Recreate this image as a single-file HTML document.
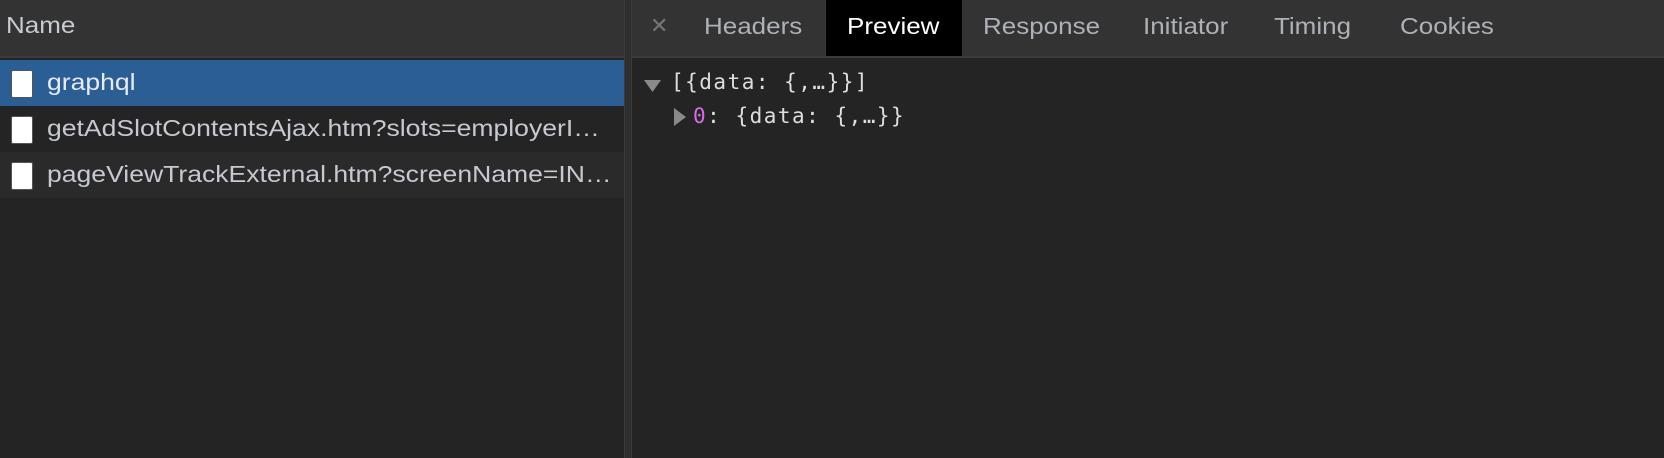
<!DOCTYPE html>
<html><head><style>
body{margin:0;width:1664px;height:458px;background:#242424;overflow:hidden;font-family:"Liberation Sans",sans-serif;position:relative}
.l{position:absolute;left:0;top:0;width:624px;height:458px;background:#242424}
.hd{position:absolute;left:0;top:0;width:624px;height:56px;background:#333;border-bottom:2px solid #3c3c3c}
.hd span{position:absolute;left:6px;top:12px;font-size:23px;color:#c8ccd2;transform:scaleX(1.13);transform-origin:left}
.row{position:absolute;left:0;width:624px;height:46px}
.row .ic{position:absolute;left:11px;top:10px;width:22px;height:28px;background:#fff;border:1px solid #555;box-sizing:border-box;border-radius:2px}
.row .t{position:absolute;left:47px;top:9px;font-size:23.5px;color:#c6cad0;white-space:nowrap;transform:scaleX(1.13);transform-origin:left}
.div{position:absolute;left:624px;top:0;width:8px;height:458px;background:#2e2e2e;border-left:1px solid #3a3a3a;border-right:1px solid #3a3a3a;box-sizing:border-box}
.rh{position:absolute;left:632px;top:0;width:1032px;height:56px;background:#333;border-bottom:2px solid #3c3c3c}
.tab{position:absolute;top:13px;font-size:23px;color:#aeb2b8;transform:scaleX(1.13);transform-origin:left}
.mono{position:absolute;font-family:"DejaVu Sans Mono","Liberation Mono",monospace;font-size:21px;color:#dedede;white-space:pre;letter-spacing:1.5px}
</style></head><body>
<div class="l"></div>
<div class="hd"><span>Name</span></div>
<div class="row" style="top:60px;background:#2c5e96"><div class="ic"></div><div class="t" style="color:#e6ecf4">graphql</div></div>
<div class="row" style="top:106px;background:#242424"><div class="ic"></div><div class="t">getAdSlotContentsAjax.htm?slots=employerI…</div></div>
<div class="row" style="top:152px;background:#2a2a2a"><div class="ic"></div><div class="t">pageViewTrackExternal.htm?screenName=IN…</div></div>
<div class="div"></div>
<div class="rh"></div>
<div class="tab" style="left:650px;top:13px;color:#777;transform:none;font-size:22px">✕</div>
<div class="tab" style="left:704px">Headers</div>
<div style="position:absolute;left:826px;top:0;width:136px;height:56px;background:#000"></div>
<div class="tab" style="left:847px;color:#fff">Preview</div>
<div class="tab" style="left:983px">Response</div>
<div class="tab" style="left:1143px">Initiator</div>
<div class="tab" style="left:1274px">Timing</div>
<div class="tab" style="left:1400px">Cookies</div>
<svg style="position:absolute;left:644px;top:80px" width="18" height="13"><path d="M0 0H17L8.5 12Z" fill="#8a8a8a"/></svg>
<div class="mono" style="left:671px;top:70px">[{data: {,…}}]</div>
<svg style="position:absolute;left:674px;top:108px" width="13" height="18"><path d="M0 0V18L12 9Z" fill="#8a8a8a"/></svg>
<div class="mono" style="left:693px;top:104px"><span style="color:#d36ee6">0</span>: {data: {,…}}</div>
</body></html>
